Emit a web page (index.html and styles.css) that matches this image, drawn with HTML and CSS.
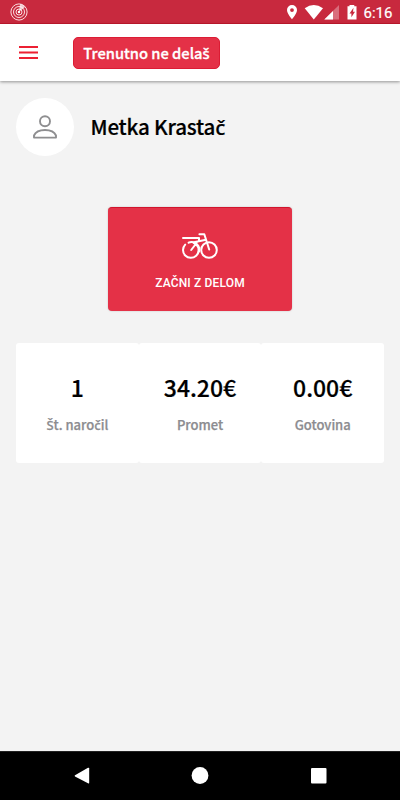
FILE: index.html
```html
<!DOCTYPE html>
<html lang="sl">
<head>
<meta charset="utf-8">
<title>Metka Krastač</title>
<link rel="stylesheet" href="styles.css">
</head>
<body>
<div class="screen">
  <div class="status">
    <svg class="radar" width="20" height="20" viewBox="0 0 20 20" fill="none" stroke="#fbdde1">
      <circle cx="10" cy="10" r="8.1" stroke-width="1"/>
      <circle cx="10" cy="10" r="5.5" stroke-width="1"/>
      <circle cx="10" cy="10" r="3" stroke-width="1"/>
      <circle cx="10" cy="10" r="1.2" fill="#fff" stroke="none"/>
      <path d="M10 10L11 2A8 8 0 0 1 16 5Z" fill="#fff" fill-opacity=".75" stroke="none"/>
    </svg>
    <svg class="signals" width="74" height="24" viewBox="0 0 74 24" fill="#fff">
      <path fill-rule="evenodd" d="M5 5A5 5 0 0 0 0 10C0 13.7 5 19.2 5 19.2S10 13.7 10 10A5 5 0 0 0 5 5ZM5 8.2A1.9 1.9 0 1 1 5 12A1.9 1.9 0 0 1 5 8.2Z"/>
      <path d="M17.7 8.2Q26.8 1.8 36 8.2L26.8 19.5Z"/>
      <path d="M52 5V19.5H37.3Z" fill-opacity=".32"/>
      <path d="M46 11V19.5H37.3Z"/>
      <path fill-rule="evenodd" d="M60.5 6.2H62.5V5H67.3V6.2H69.5V19.6H60.5ZM66.5 7.8L62.5 13.6H64.4V17.3L68 11.7H66Z"/>
    </svg>
    <span class="clock">6:16</span>
  </div>
  <header class="bar">
    <svg class="menu" width="19" height="14" viewBox="0 0 19 14" fill="#ec2033">
      <path d="M0 0H19V2H0ZM0 5.4H19V7.4H0ZM0 11H19V13H0Z"/>
    </svg>
    <div class="badge">Trenutno ne dela<span class="accent">š</span></div>
  </header>
  <main>
    <section class="profile">
      <div class="avatar">
        <svg width="26" height="26" viewBox="0 0 26 26" fill="none" stroke="#8e8e90" stroke-width="1.9">
          <circle cx="13" cy="7.2" r="5"/>
          <path d="M2 23.6V21.5C3.6 17.8 8 16 13 16S22.4 17.8 24 21.5V23.6Z" stroke-linejoin="round"/>
        </svg>
      </div>
      <h1>Metka Krasta<span class="accent">č</span></h1>
    </section>
    <button class="start">
      <svg width="36" height="26" viewBox="0 0 36 26" fill="none" stroke="#fff" stroke-width="2" stroke-linecap="round" stroke-linejoin="round">
        <path d="M3.2 11.6A7.8 7.8 0 1 0 14.6 11.8"/>
        <circle cx="27" cy="17" r="7.8"/>
        <path d="M1 5.1H17V8.2M17.4 1.2H22.3L27.2 16.5M6.6 9.7Q9 8.3 12 9.3L24 6.7M9.2 17L15.7 8.5M11.5 10Q18.5 11.5 17.2 18.5"/>
      </svg>
      <span>ZAČNI Z DELOM</span>
    </button>
    <section class="stats">
      <div class="stat"><strong>1</strong><p><span class="accent">Š</span>t. naro<span class="accent">č</span>il</p></div>
      <div class="stat"><strong>34.20€</strong><p>Promet</p></div>
      <div class="stat"><strong>0.00€</strong><p>Gotovina</p></div>
    </section>
  </main>
  <nav>
    <svg width="16" height="18" viewBox="0 0 16 18" fill="#fff"><path d="M1 8.2L14 .8Q15.2 .3 15.2 1.6V15.4Q15.2 16.8 14 16.2L1 9.4Q.2 8.8 1 8.2Z"/></svg>
    <svg width="17" height="18" viewBox="0 0 17 18" fill="#fff"><circle cx="8" cy="8.5" r="8.4"/></svg>
    <svg width="16" height="18" viewBox="0 0 16 18" fill="#fff"><rect y="1" width="15.5" height="15.5" rx="1"/></svg>
  </nav>
</div>
</body>
</html>
```
FILE: styles.css
```css
* { box-sizing: border-box; }
body { margin: 0; font-family: "Noto Sans CJK JP", "Noto Sans", sans-serif; }
svg { display: block; flex: none; overflow: visible; }
.accent { font-family: "Noto Sans", sans-serif; line-height: 1; }
.screen { height: 800px; display: flex; flex-direction: column; background: #f3f3f3; overflow: hidden; }
.status { height: 24px; flex: none; display: flex; background: #c8293e; padding: 0 8px; border-bottom: 1px solid #c3182d; }
.radar { margin: 2px auto 0 1px; }
.signals { margin-right: 2.5px; }
.clock { font: 400 15px/26px Roboto, sans-serif; color: #fff; width: 28.5px; white-space: nowrap; -webkit-text-stroke: .2px #fff; }
.bar { height: 57px; flex: none; display: flex; background: #fff; box-shadow: 0 1px 3px rgba(0,0,0,.4); padding-left: 19px; }
.menu { margin: 22px 35px 0 0; }
.badge { width: 147px; height: 32px; margin-top: 13px; border-radius: 5px; background: #e43147; border: 1px solid #dc1c34; color: #fff; font-size: 14.7px; font-weight: 500; -webkit-text-stroke: .3px #fff; line-height: 29px; text-align: center; white-space: nowrap; }
main { flex: 1; padding: 17px 16px 0; }
.profile { display: flex; align-items: center; height: 58px; }
.avatar { width: 58px; height: 58px; border-radius: 50%; background: #fff; display: flex; align-items: center; justify-content: center; }
h1 { margin: -2px 0 0 16.5px; font-size: 20.6px; letter-spacing: -.2px; font-weight: 500; line-height: 30px; white-space: nowrap; color: #000; -webkit-text-stroke: .2px #000; }
.start { display: flex; flex-direction: column; align-items: center; justify-content: flex-start; width: 184px; height: 103.5px; margin: 51px auto 0; padding: 24.5px 0 0; border: 0; border-top: 1px solid #d1142c; border-radius: 4px; background: #e43147; color: #fff; box-shadow: 0 0 2px rgba(0,0,0,.2); }
.start span { margin-top: 15.5px; font: 500 12px/18px Roboto, sans-serif; letter-spacing: .15px; white-space: nowrap; }
.stats { display: flex; margin-top: 32.9px; }
.stat { flex: 1; height: 120px; padding-top: 26.4px; background: #fff; border-radius: 3px; text-align: center; }
.stat strong { display: block; font-size: 23px; font-weight: 500; line-height: 34px; color: #000; -webkit-text-stroke: .2px #000; }
.stat p { margin: 11.4px 0 0; font-size: 13px; font-weight: 500; line-height: 20px; color: #8c8c90; -webkit-text-stroke: .25px #8c8c90; }
nav { height: 49px; flex: none; display: flex; justify-content: space-between; padding: 15px 73px 0 74px; background: #000; border-top: 1px solid #222; }
```
